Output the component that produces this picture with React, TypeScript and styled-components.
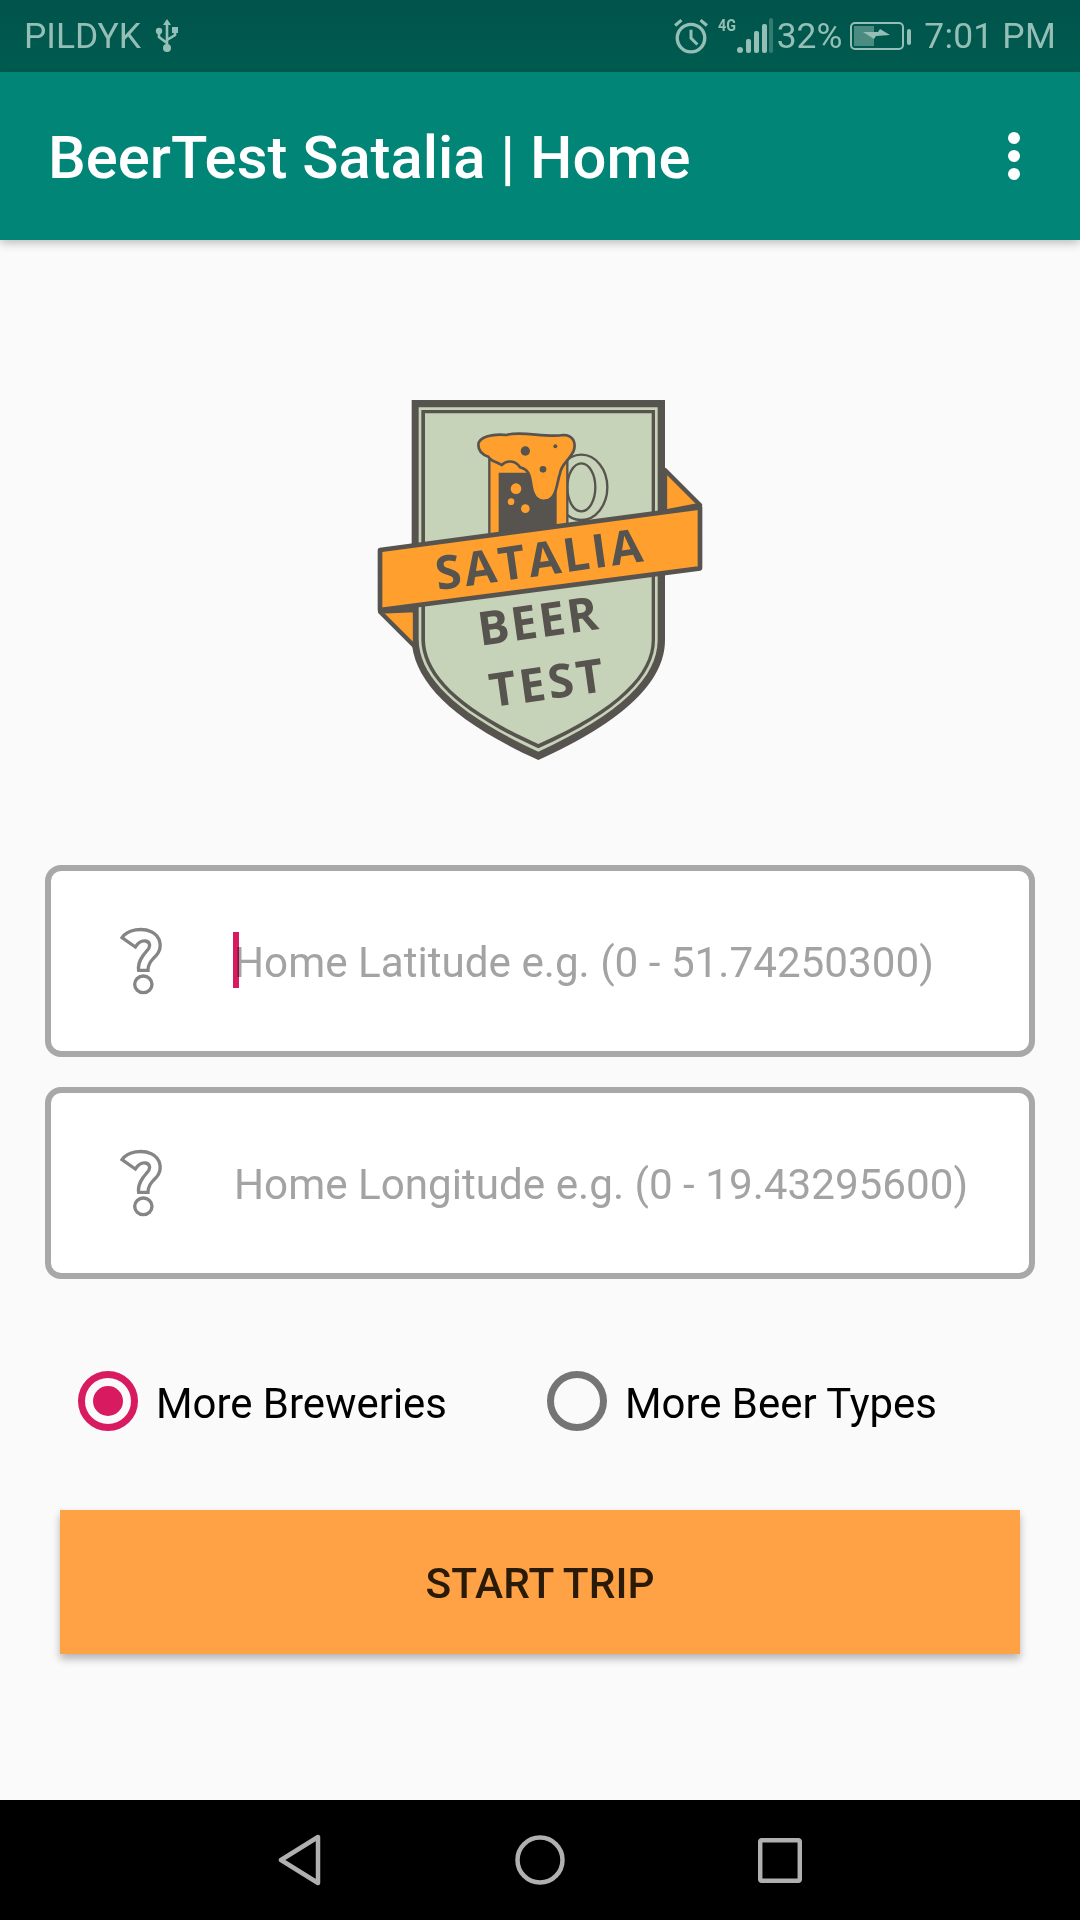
import React from "react";
import styled, { createGlobalStyle } from "styled-components";

const GlobalStyle = createGlobalStyle`
  html, body {
    margin: 0;
    padding: 0;
    background: #fafafa;
  }
  * {
    box-sizing: border-box;
  }
`;

const Page = styled.div`
  width: 1080px;
  height: 1920px;
  display: flex;
  flex-direction: column;
  font-family: Roboto, "Liberation Sans", sans-serif;
  background: #fafafa;
  overflow: hidden;
`;

const StatusBar = styled.div`
  height: 72px;
  flex: none;
  display: flex;
  align-items: center;
  justify-content: space-between;
  padding: 0 24px;
  background: linear-gradient(180deg, #00534a 0%, #005c50 100%);
  color: #95bfb6;
  font-size: 35.4px;
  line-height: 74px;
`;

const StatusGroup = styled.div`
  display: flex;
  align-items: center;
`;

const Carrier = styled.span`
  margin-right: 14px;
`;

const AlarmGap = styled.span`
  width: 9px;
`;

const Percent = styled.span`
  margin: 0 8px 0 3px;
`;

const Clock = styled.span`
  margin-left: 12px;
  letter-spacing: 0.2px;
`;

const Toolbar = styled.div`
  height: 168px;
  flex: none;
  display: flex;
  align-items: center;
  justify-content: space-between;
  padding: 0 60px 0 48px;
  background: #008577;
  box-shadow: 0 3px 9px rgba(0, 0, 0, 0.25);
  position: relative;
  z-index: 1;
`;

const Title = styled.div`
  color: #ffffff;
  font-size: 59.8px;
  font-weight: 500;
  padding-top: 4px;
`;

const MenuDots = styled.div`
  display: flex;
  flex-direction: column;
  gap: 6px;
`;

const Dot = styled.span`
  width: 12px;
  height: 12px;
  border-radius: 50%;
  background: #ffffff;
`;

const Content = styled.main`
  flex: 1;
  display: flex;
  flex-direction: column;
  align-items: center;
  padding: 140px 45px 0;
`;

const LogoSvg = styled.svg`
  display: block;
  flex: none;
  margin-bottom: 95px;
`;

const LogoText = styled.text`
  font-family: "Open Sans", "Noto Sans", sans-serif;
  font-weight: 700;
  fill: #57534e;
`;

const Field = styled.div`
  width: 990px;
  height: 192px;
  flex: none;
  display: flex;
  align-items: center;
  margin-bottom: 30px;
  padding-left: 69px;
  background: #ffffff;
  border: 6px solid #a8a8a8;
  border-radius: 16px;
`;

const FieldIcon = styled.svg`
  flex: none;
  margin-right: 70px;
`;

const Placeholder = styled.div`
  position: relative;
  padding-top: 2px;
  color: #a3a3a3;
  font-size: 42.2px;
  white-space: nowrap;
`;

const Caret = styled.span`
  position: absolute;
  left: -1px;
  top: -4px;
  width: 6px;
  height: 56px;
  background: #d81b60;
  mix-blend-mode: multiply;
`;

const RadioRow = styled.div`
  width: 100%;
  display: flex;
  align-items: center;
  padding-left: 33px;
  margin: 62px 0 79px;
`;

const RadioItem = styled.label<{ $width: number }>`
  display: flex;
  align-items: center;
  gap: 18px;
  width: ${(p) => p.$width}px;
  color: #000000;
  font-size: 41.9px;
`;

const RadioLabel = styled.span`
  padding-top: 4px;
`;

const RadioRing = styled.span<{ $checked?: boolean }>`
  width: 60px;
  height: 60px;
  flex: none;
  display: flex;
  align-items: center;
  justify-content: center;
  border-radius: 50%;
  border: 7px solid ${(p) => (p.$checked ? "#d81b60" : "#757575")};
`;

const RadioDot = styled.span`
  width: 30px;
  height: 30px;
  border-radius: 50%;
  background: #d81b60;
`;

const StartButton = styled.button`
  width: 960px;
  height: 144px;
  flex: none;
  border: 0;
  padding: 2px 0 0;
  background: #ffa245;
  color: #2a1a08;
  font-family: inherit;
  font-size: 42.4px;
  font-weight: 500;
  box-shadow: 0 5px 8px rgba(0, 0, 0, 0.28);
`;

const NavBar = styled.nav`
  height: 120px;
  flex: none;
  display: flex;
  align-items: center;
  justify-content: center;
  background: #000000;
`;

const NavSlot = styled.div`
  width: 240px;
  display: flex;
  justify-content: center;
`;

function UsbIcon() {
  return (
    <svg width="24" height="36" viewBox="0 0 24 36" fill="none">
      <path d="M12 1l-4 6h8z" fill="#95bfb6" />
      <path d="M12 6v24M12 25l-8-6v-4M12 22l8-5v-4" stroke="#95bfb6" strokeWidth="2.6" />
      <circle cx="12" cy="30" r="4" fill="#95bfb6" />
      <circle cx="4" cy="13" r="3.2" fill="#95bfb6" />
      <rect x="17" y="9" width="6" height="6" fill="#95bfb6" />
    </svg>
  );
}

function AlarmIcon() {
  return (
    <svg width="36" height="36" viewBox="0 0 34 34" fill="none" stroke="#95bfb6">
      <circle cx="17" cy="19" r="13" strokeWidth="3.2" />
      <path d="M17 11v8l6 6" strokeWidth="2.8" />
      <path d="M2 7l6-5M32 7l-6-5" strokeWidth="3" />
    </svg>
  );
}

function SignalIcon() {
  return (
    <svg width="56" height="44" viewBox="-2 -4 56 44">
      <text
        x="-2"
        y="13"
        fontSize="17"
        fontWeight="700"
        fontFamily="Roboto, sans-serif"
        fill="#95bfb6"
        textLength="18"
        lengthAdjust="spacingAndGlyphs"
      >
        4G
      </text>
      <circle cx="20" cy="32" r="3" fill="#95bfb6" />
      <rect x="26" y="21" width="5" height="14" rx="2" fill="#95bfb6" />
      <rect x="34" y="13" width="5" height="22" rx="2" fill="#95bfb6" />
      <rect x="42" y="6" width="5" height="29" rx="2" fill="#95bfb6" />
      <rect x="49" y="0" width="4" height="35" rx="2" fill="#95bfb6" opacity="0.35" />
    </svg>
  );
}

function BatteryIcon() {
  return (
    <svg width="62" height="30" viewBox="0 0 62 30">
      <rect x="1" y="2" width="52" height="26" rx="4" fill="none" stroke="#95bfb6" strokeWidth="2" />
      <rect x="4" y="5" width="20" height="20" fill="#95bfb6" opacity="0.5" />
      <path d="M13 11l15 0 2-3 10 6-14 1-2 3z" fill="#95bfb6" />
      <rect x="57" y="8" width="4" height="16" rx="2" fill="#95bfb6" />
    </svg>
  );
}

function HelpIcon() {
  return (
    <FieldIcon width="44" height="68" viewBox="0 0 132 204" fill="#ffffff" stroke="#858585" strokeWidth="10">
      <path d="M6 32C24 6 68 2 94 14C124 28 128 64 108 86C92 102 84 112 84 130L56 130C52 106 66 88 80 72C94 58 90 44 76 42C62 40 54 48 46 60Z" />
      <ellipse cx="70" cy="172" rx="26" ry="25" />
    </FieldIcon>
  );
}

function Logo() {
  const dark = "#57534e";
  const sage = "#c7d3b8";
  const orange = "#ffa02e";
  return (
    <LogoSvg width="360" height="390" viewBox="0 0 1080 1170">
      {/* shield */}
      <path d="M155 60H915V780C915 900 800 1020 535 1140C270 1020 160 900 155 780Z" fill={dark} />
      <path d="M176 82H893V780C893 890 785 1000 535 1115C285 1000 178 890 176 780Z" fill={sage} />
      <path d="M184 90H885V780C885 885 780 995 535 1105C290 995 186 885 184 780Z" fill={dark} />
      <path d="M195 100H875V780C875 880 775 985 535 1092C295 985 197 880 195 780Z" fill={sage} />

      {/* ribbon folds */}
      <path d="M915 270L1020 375L915 395Z" fill={orange} stroke={dark} strokeWidth="13" strokeLinejoin="round" />
      <path d="M60 695L165 800V690Z" fill={orange} stroke={dark} strokeWidth="13" strokeLinejoin="round" />

      {/* mug */}
      <ellipse cx="664" cy="322" rx="78" ry="98" fill={sage} stroke={dark} strokeWidth="7" />
      <ellipse cx="664" cy="322" rx="42" ry="72" fill={sage} stroke={dark} strokeWidth="7" />
      <path d="M388 240H622V480H388Z" fill={orange} stroke={dark} strokeWidth="7" />
      <path d="M416 278H590V480H416Z" fill={dark} />
      <circle cx="468" cy="326" r="16" fill={orange} />
      <circle cx="453" cy="365" r="10" fill={orange} />
      <circle cx="496" cy="386" r="13" fill={orange} />
      <path
        d="M355 195C355 170 400 160 440 165C480 150 560 175 610 165C640 165 650 190 640 215C625 245 605 250 600 280C590 310 590 350 565 360C535 370 520 350 515 320C510 290 510 270 480 262C465 240 440 240 425 255C410 245 395 245 385 230C370 225 355 215 355 195Z"
        fill={orange}
        stroke={dark}
        strokeWidth="8"
      />
      <circle cx="496" cy="213" r="14" fill={dark} />
      <circle cx="586" cy="199" r="6" fill={dark} />
      <circle cx="549" cy="268" r="10" fill={dark} />

      {/* banner */}
      <path d="M60 510L1020 382V565L60 690Z" fill={orange} stroke={dark} strokeWidth="14" strokeLinejoin="round" />
      <LogoText x="543" y="587" fontSize="140" textAnchor="middle" textLength="625" transform="rotate(-8 543 587)">
        SATALIA
      </LogoText>
      <LogoText x="540" y="772" fontSize="140" textAnchor="middle" textLength="362" transform="rotate(-8 540 772)">
        BEER
      </LogoText>
      <LogoText x="566" y="958" fontSize="140" textAnchor="middle" textLength="345" transform="rotate(-8 566 958)">
        TEST
      </LogoText>
    </LogoSvg>
  );
}

export default function App() {
  return (
    <Page>
      <GlobalStyle />
      <StatusBar>
        <StatusGroup>
          <Carrier>PILDYK</Carrier>
          <UsbIcon />
        </StatusGroup>
        <StatusGroup>
          <AlarmIcon />
          <AlarmGap />
          <SignalIcon />
          <Percent>32%</Percent>
          <BatteryIcon />
          <Clock>7:01 PM</Clock>
        </StatusGroup>
      </StatusBar>

      <Toolbar>
        <Title>BeerTest Satalia | Home</Title>
        <MenuDots>
          <Dot />
          <Dot />
          <Dot />
        </MenuDots>
      </Toolbar>

      <Content>
        <Logo />
        <Field>
          <HelpIcon />
          <Placeholder>
            <Caret />
            Home Latitude e.g. (0 - 51.74250300)
          </Placeholder>
        </Field>
        <Field>
          <HelpIcon />
          <Placeholder>Home Longitude e.g. (0 - 19.43295600)</Placeholder>
        </Field>
        <RadioRow>
          <RadioItem $width={469}>
            <RadioRing $checked>
              <RadioDot />
            </RadioRing>
            <RadioLabel>More Breweries</RadioLabel>
          </RadioItem>
          <RadioItem $width={420}>
            <RadioRing />
            <RadioLabel>More Beer Types</RadioLabel>
          </RadioItem>
        </RadioRow>
        <StartButton>START TRIP</StartButton>
      </Content>

      <NavBar>
        <NavSlot>
          <svg width="44" height="52" viewBox="0 0 44 52" fill="none" stroke="#b0b0b0" strokeWidth="4.5" strokeLinejoin="round">
            <path d="M40 3V49L3 26Z" />
          </svg>
        </NavSlot>
        <NavSlot>
          <svg width="50" height="50" viewBox="0 0 50 50" fill="none" stroke="#b0b0b0" strokeWidth="4.5">
            <circle cx="25" cy="25" r="22.5" />
          </svg>
        </NavSlot>
        <NavSlot>
          <svg width="44" height="45" viewBox="0 0 44 45" fill="none" stroke="#b0b0b0" strokeWidth="4.5" strokeLinejoin="round">
            <rect x="2.2" y="2.2" width="39.6" height="40.6" rx="1.5" />
          </svg>
        </NavSlot>
      </NavBar>
    </Page>
  );
}
